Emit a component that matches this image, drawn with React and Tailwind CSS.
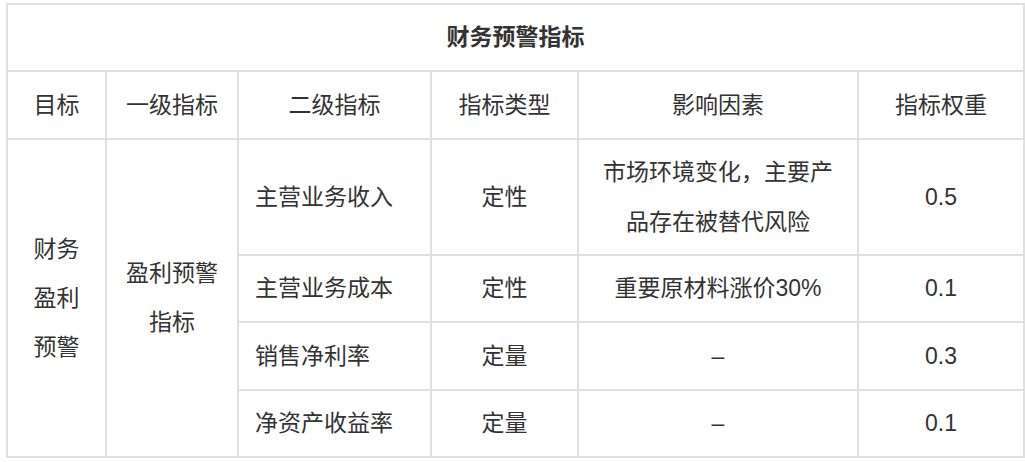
import React from "react";

const cell = "border-2 border-[#e0e0e0] px-4 text-center align-middle leading-[49px]";

export default function App() {
  return (
    <div
      className="w-[1025px] h-[462px] bg-white pt-[3px] pl-[6px] text-[23px] text-[#333333]"
      style={{ fontFamily: '"Liberation Sans", "Noto Sans CJK SC", sans-serif' }}
    >
      <table className="border-collapse table-fixed w-[1017px]">
        <colgroup>
          <col className="w-[99px]" />
          <col className="w-[132px]" />
          <col className="w-[193px]" />
          <col className="w-[147px]" />
          <col className="w-[280px]" />
          <col className="w-[166px]" />
        </colgroup>
        <tbody>
          <tr className="h-[67px]">
            <td colSpan={6} className={`${cell} font-semibold`}>财务预警指标</td>
          </tr>
          <tr className="h-[68px]">
            <td className={cell}>目标</td>
            <td className={cell}>一级指标</td>
            <td className={cell}>二级指标</td>
            <td className={cell}>指标类型</td>
            <td className={cell}>影响因素</td>
            <td className={cell}>指标权重</td>
          </tr>
          <tr className="h-[116px]">
            <td rowSpan={4} className={`${cell} px-5`}>财务盈利预警</td>
            <td rowSpan={4} className={cell}>盈利预警指标</td>
            <td className={`${cell} text-left`}>主营业务收入</td>
            <td className={cell}>定性</td>
            <td className={`${cell} leading-[50px]`}>市场环境变化，主要产品存在被替代风险</td>
            <td className={cell}>0.5</td>
          </tr>
          <tr className="h-[67px]">
            <td className={`${cell} text-left`}>主营业务成本</td>
            <td className={cell}>定性</td>
            <td className={cell}>重要原材料涨价30%</td>
            <td className={cell}>0.1</td>
          </tr>
          <tr className="h-[68px]">
            <td className={`${cell} text-left`}>销售净利率</td>
            <td className={cell}>定量</td>
            <td className={cell}>–</td>
            <td className={cell}>0.3</td>
          </tr>
          <tr className="h-[67px]">
            <td className={`${cell} text-left`}>净资产收益率</td>
            <td className={cell}>定量</td>
            <td className={cell}>–</td>
            <td className={cell}>0.1</td>
          </tr>
        </tbody>
      </table>
    </div>
  );
}
